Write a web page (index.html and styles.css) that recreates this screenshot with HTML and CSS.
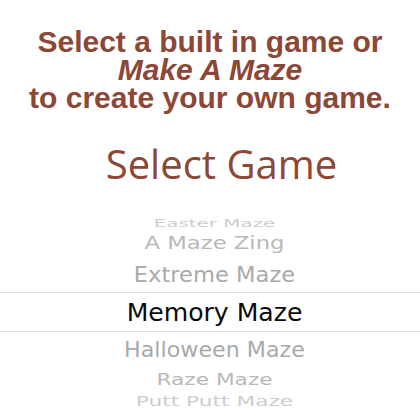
FILE: index.html
```html
<!DOCTYPE html>
<html>
<head>
<meta charset="utf-8">
<link rel="stylesheet" href="styles.css">
</head>
<body>
<div class="screen">
  <div class="intro">
    <div class="intro-line">Select a built in game or</div>
    <div class="intro-line intro-em">Make A Maze</div>
    <div class="intro-line">to create your own game.</div>
  </div>
  <div class="title">Select Game</div>
  <div class="picker">
    <div class="row row-3t"><span class="label">Easter Maze</span></div>
    <div class="row row-2t"><span class="label">A Maze Zing</span></div>
    <div class="row row-1t"><span class="label">Extreme Maze</span></div>
    <div class="row row-sel"><span class="label">Memory Maze</span></div>
    <div class="row row-1b"><span class="label">Halloween Maze</span></div>
    <div class="row row-2b"><span class="label">Raze Maze</span></div>
    <div class="row row-3b"><span class="label">Putt Putt Maze</span></div>
  </div>
</div>
</body>
</html>
```
FILE: styles.css
```css
html, body {
  margin: 0;
  padding: 0;
  background: #ffffff;
}

.screen {
  width: 420px;
  height: 420px;
  overflow: hidden;
  display: flex;
  flex-direction: column;
}

.intro {
  margin-top: 28px;
  text-align: center;
  font-family: "Liberation Sans", Arial, sans-serif;
  font-weight: bold;
  font-size: 30px;
  line-height: 28px;
  color: #8c4737;
}

.intro-em {
  font-style: italic;
}

.title {
  margin-top: 28px;
  padding-left: 23px;
  text-align: center;
  font-family: "Open Sans", sans-serif;
  font-size: 40px;
  line-height: 48px;
  color: #8c4737;
}

.picker {
  margin-top: 27px;
  padding-left: 9px;
  display: flex;
  flex-direction: column;
  font-family: "DejaVu Sans", sans-serif;
}

.row {
  display: flex;
  align-items: center;
  justify-content: center;
  overflow: visible;
  white-space: nowrap;
}

.label {
  display: block;
}

.row-3t { height: 16px; font-size: 19.9px; color: #cdcdcd; }
.row-3t .label { transform: scaleY(0.52); }

.row-2t { height: 24px; font-size: 22.7px; color: #b8b8b8; }
.row-2t .label { transform: scaleY(0.79); }

.row-1t { height: 37px; font-size: 22.6px; color: #aaaaaa; }
.row-1t .label { transform: scaleY(0.97); }

.row-sel {
  height: 40px;
  box-sizing: border-box;
  border-top: 1px solid #e2e2e2;
  border-bottom: 1px solid #e2e2e2;
  margin-left: -9px;
  padding-left: 9px;
  font-size: 25.1px;
  color: #0a0a0a;
}

.row-1b { height: 33px; font-size: 22.2px; color: #aaaaaa; }
.row-1b .label { transform: scaleY(0.97); }

.row-2b { height: 29px; font-size: 21.7px; color: #b8b8b8; }
.row-2b .label { transform: scaleY(0.76); }

.row-3b { height: 14px; font-size: 21.7px; color: #cdcdcd; }
.row-3b .label { transform: scaleY(0.62); }
```
